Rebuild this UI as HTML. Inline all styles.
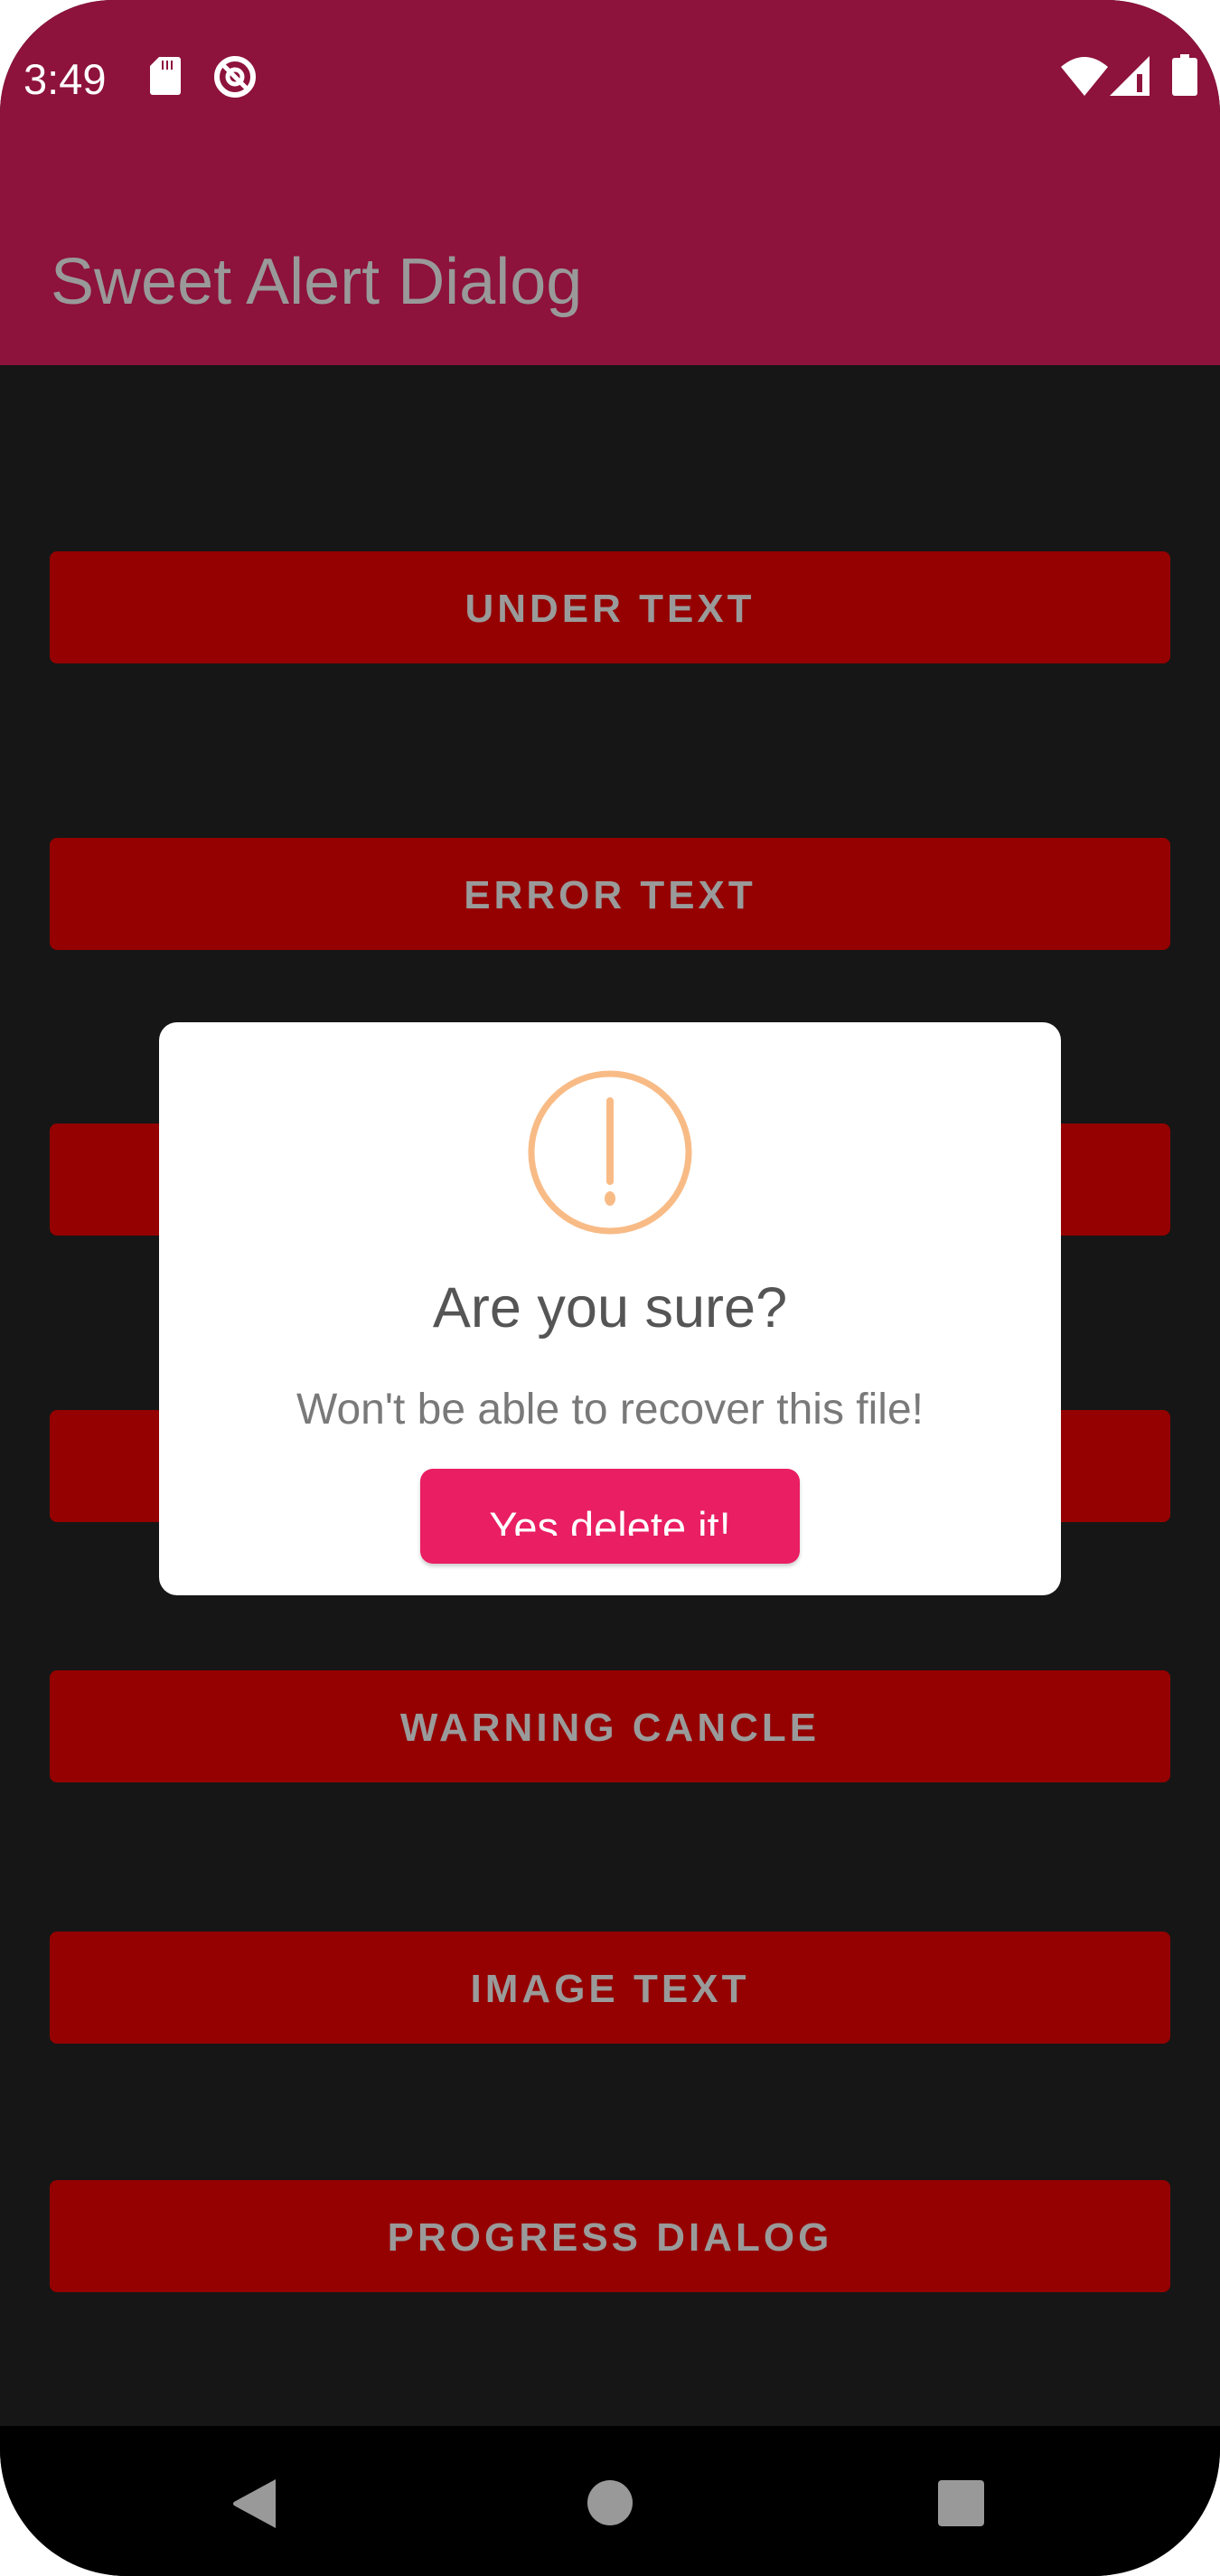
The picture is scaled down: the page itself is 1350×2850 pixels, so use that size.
<!DOCTYPE html>
<html><head><meta charset="utf-8"><style>
html,body{margin:0;padding:0;background:#fff;}
body{width:1350px;height:2850px;position:relative;overflow:hidden;font-family:"Liberation Sans",sans-serif;}
#screen{position:absolute;left:0;top:0;width:1350px;height:2850px;background:#161616;border-radius:125px 125px 140px 140px;overflow:hidden;}
#hdr{position:absolute;left:0;top:0;width:1350px;height:404px;background:#8D123C;}
.time{position:absolute;left:26px;top:60px;color:#fff;font-size:47px;}
.title{position:absolute;left:56px;top:271px;color:#999;font-size:72px;}
.btn{position:absolute;left:55px;width:1240px;height:124px;background:#950000;border-radius:8px;color:#9a9a9a;font-size:44px;font-weight:bold;letter-spacing:4px;text-align:center;line-height:128px;}
#nav{position:absolute;left:0;top:2684px;width:1350px;height:166px;background:#000;}
#dlg{position:absolute;left:176px;top:1131px;width:998px;height:634px;background:#fff;border-radius:20px;}
.dt{position:absolute;left:0;width:998px;text-align:center;}
</style></head><body>
<div id="screen">
<div id="hdr">
<div class="time">3:49</div>
<svg style="position:absolute;left:166px;top:63px" width="34" height="42" viewBox="0 0 34 42"><path d="M10 0H31a3 3 0 0 1 3 3V39a3 3 0 0 1-3 3H3a3 3 0 0 1-3-3V10z" fill="#fff"/><path d="M14 4v10M19 4v10M24 4v10" stroke="#8D123C" stroke-width="2"/></svg>
<svg style="position:absolute;left:235px;top:61px" width="50" height="48" viewBox="0 0 50 48"><circle cx="25" cy="24" r="20" fill="none" stroke="#fff" stroke-width="6"/><circle cx="25" cy="24" r="8" fill="none" stroke="#fff" stroke-width="5"/><path d="M12 11L38 37" stroke="#fff" stroke-width="5"/></svg>
<svg style="position:absolute;left:1174px;top:62px" width="52" height="44" viewBox="0 0 52 44"><path d="M0 12Q26-10 52 12L26 44z" fill="#fff"/></svg>
<svg style="position:absolute;left:1228px;top:62px" width="44" height="44" viewBox="0 0 44 44"><path d="M44 0V44H0z" fill="#fff"/><path d="M30 20V40H36V20z" fill="#8D123C"/></svg>
<svg style="position:absolute;left:1297px;top:60px" width="28" height="46" viewBox="0 0 28 46"><rect x="9" y="0" width="10" height="5" fill="#fff"/><rect x="0" y="4" width="28" height="42" rx="3" fill="#fff"/></svg>
<div class="title">Sweet Alert Dialog</div>
</div>
<div class="btn" style="top:610px">UNDER TEXT</div>
<div class="btn" style="top:927px">ERROR TEXT</div>
<div class="btn" style="top:1243px">SUCCESS TEXT</div>
<div class="btn" style="top:1560px">WARNING TEXT</div>
<div class="btn" style="top:1848px">WARNING CANCLE</div>
<div class="btn" style="top:2137px">IMAGE TEXT</div>
<div class="btn" style="top:2412px">PROGRESS DIALOG</div>
<div id="dlg">
<svg style="position:absolute;left:408px;top:53px" width="182" height="182" viewBox="0 0 182 182"><circle cx="91" cy="91" r="87" fill="none" stroke="#F8BB86" stroke-width="7"/><path d="M91 34V123" stroke="#F8BB86" stroke-width="8" stroke-linecap="round"/><ellipse cx="91" cy="142" rx="6" ry="8" fill="#F8BB86"/></svg>
<div class="dt" style="top:280px;font-size:63px;color:#555">Are you sure?</div>
<div class="dt" style="top:401px;font-size:48px;color:#797979">Won't be able to recover this file!</div>
<div style="position:absolute;left:289px;top:494px;width:420px;height:105px;background:#E91E63;border-radius:14px;box-shadow:0 3px 4px rgba(0,0,0,0.2);overflow:hidden">
<div style="position:absolute;left:0;top:0;width:420px;height:74px;overflow:hidden"><div style="position:absolute;left:0;top:40px;width:420px;text-align:center;color:#fff;font-size:47px;line-height:50px">Yes delete it!</div></div>
</div>
</div>
<div id="nav">
<svg style="position:absolute;left:257px;top:58px" width="50" height="56" viewBox="0 0 50 56"><path d="M48 1V55L2 30Q0 28 2 26z" fill="#999"/></svg>
<div style="position:absolute;left:650px;top:60px;width:50px;height:50px;border-radius:50%;background:#999"></div>
<div style="position:absolute;left:1038px;top:60px;width:51px;height:51px;border-radius:4px;background:#999"></div>
</div>
</div>
</body></html>
